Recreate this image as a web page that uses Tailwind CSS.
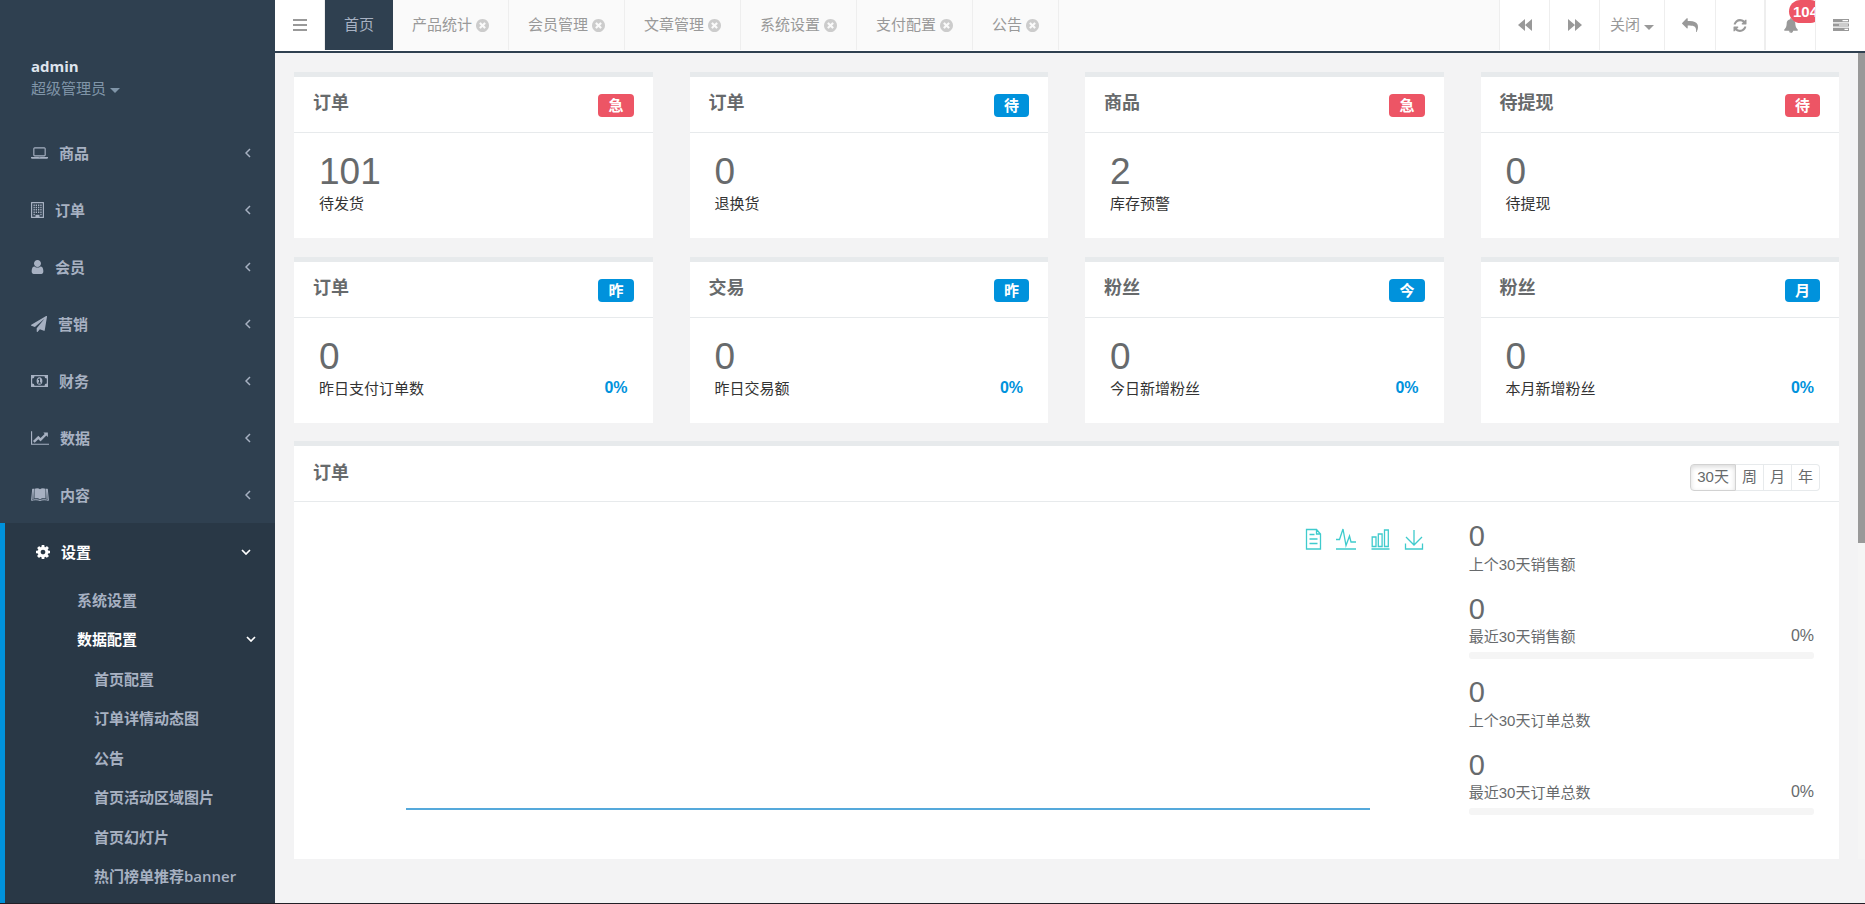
<!DOCTYPE html>
<html lang="zh-CN">
<head>
<meta charset="utf-8">
<title>管理后台</title>
<script src="https://cdn.jsdelivr.net/npm/@tailwindcss/browser@4"></script>
</head>
<body class="h-screen overflow-hidden bg-[#f3f3f4] font-['Liberation_Sans','Noto_Sans_CJK_SC',sans-serif] text-[15px] leading-[22px] text-[#676a6c]">

<svg class="hidden" aria-hidden="true">
  <symbol id="laptop" viewBox="0 0 1920 1792"><path d="M416 1280q-66 0-113-47t-47-113v-704q0-66 47-113t113-47h1088q66 0 113 47t47 113v704q0 66-47 113t-113 47h-1088zm-32-864v704q0 13 9.500 22.500t22.500 9.500h1088q13 0 22.500-9.500t9.500-22.500v-704q0-13-9.500-22.500t-22.500-9.500h-1088q-13 0-22.500 9.500t-9.500 22.500zm1376 928h160v96q0 40-47 68t-113 28h-1600q-66 0-113-28t-47-68v-96h1760zm-720 96q16 0 16-16t-16-16h-160q-16 0-16 16t16 16h160z"/></symbol>
  <symbol id="building" viewBox="0 0 13 16"><path fill-rule="evenodd" d="M.5 0h12q.5 0 .5.500v15q0 .5-.5.500h-12q-.5 0-.5-.5v-15q0-.5.500-.5zM1.200 1.200v13.600h3.300v-2h4v2h3.300v-13.600z"/><path d="M2.500 2.500h1.300v1.500h-1.300zM4.700 2.500h1.300v1.500h-1.300zM7 2.500h1.300v1.500h-1.300zM9.300 2.500h1.300v1.500h-1.300zM2.500 4.800h1.300v1.500h-1.300zM4.700 4.800h1.300v1.500h-1.300zM7 4.800h1.300v1.500h-1.300zM9.300 4.800h1.300v1.500h-1.300zM2.500 7.100h1.300v1.500h-1.300zM4.700 7.100h1.300v1.500h-1.300zM7 7.100h1.300v1.500h-1.300zM9.300 7.100h1.300v1.500h-1.300zM2.500 9.400h1.300v1.500h-1.300zM4.700 9.400h1.300v1.500h-1.300zM7 9.400h1.300v1.500h-1.300zM9.300 9.400h1.300v1.500h-1.300zM2.500 11.700h1.300v1.500h-1.300zM9.300 11.700h1.300v1.500h-1.300z"/></symbol>
  <symbol id="user" viewBox="256 128 1280 1536"><path d="M1536 1399q0 109-62.500 187t-150.500 78h-854q-88 0-150.500-78t-62.500-187q0-85 8.500-160.500t31.500-152 58.500-131 94-89 134.500-34.500q131 128 313 128t313-128q76 0 134.500 34.500t94 89 58.500 131 31.500 152 8.500 160.500zm-256-887q0 159-112.500 271.500t-271.500 112.500-271.500-112.500-112.500-271.500 112.500-271.500 271.500-112.500 271.500 112.500 112.500 271.500z"/></symbol>
  <symbol id="plane" viewBox="0 0 1792 1792"><path d="M1764 11q33 24 27 64l-256 1536q-5 29-32 45-14 8-31 8-11 0-24-5l-453-185-242 295q-18 23-49 23-13 0-22-4-19-7-30.500-23.500t-11.500-36.500v-349l864-1059-1069 925-395-162q-37-14-40-55-2-40 32-59l1664-960q15-9 32-9 20 0 36 11z"/></symbol>
  <symbol id="money" viewBox="0 0 17 12"><path fill-rule="evenodd" d="M0 0h17v12h-17zM3.500 1.200q0 2.300-2.300 2.300v5q2.300 0 2.300 2.300h10q0-2.300 2.300-2.300v-5q-2.300 0-2.300-2.300z"/><path fill-rule="evenodd" d="M8.500 2.200c1.900 0 2.900 1.800 2.900 3.800s-1 3.800-2.900 3.800-2.900-1.800-2.900-3.800 1-3.800 2.900-3.800zM8 3.500l-1.200 1.100.6.700.6-.5v2.700h-1v.9h3v-.9h-1v-4z"/></symbol>
  <symbol id="linechart" viewBox="0 0 2048 1792"><path d="M2048 1536v128h-2048v-1536h128v1408h1920zm-128-1248v435q0 21-19.500 29.500t-35.500-7.500l-121-121-633 633q-10 10-23 10t-23-10l-233-233-416 416-192-192 585-585q10-10 23-10t23 10l233 233 464-464-121-121q-16-16-7.500-35.500t29.500-19.500h435q14 0 23 9t9 23z"/></symbol>
  <symbol id="book" viewBox="0 0 18 13"><path d="M3.500.8C5.500-.2 7.800 0 9 1.200c1.200-1.200 3.500-1.400 5.500-.4v9.800c-2-.7-4.300-.5-5.500.8-1.200-1.300-3.500-1.500-5.500-.8z"/><path fill="none" stroke="currentColor" d="M2.500 1H1.700L.6 12.400c2.600-.9 6-.9 8.400.1 2.400-1 5.800-1 8.400-.1L16.300 1h-.8M2.500 1L2 11M15.500 1l.5 10"/></symbol>
  <symbol id="cog" viewBox="128 128 1536 1536"><path d="M1152 896q0-106-75-181t-181-75-181 75-75 181 75 181 181 75 181-75 75-181zm512-109v222q0 12-8 23t-20 13l-185 28q-19 54-39 91 35 50 107 138 10 12 10 25t-9 23q-27 37-99 108t-94 71q-12 0-26-9l-138-108q-44 23-91 38-16 136-29 186-7 28-36 28h-222q-14 0-24.500-8.500t-11.500-21.500l-28-184q-49-16-90-37l-141 107q-10 9-25 9-14 0-25-11-126-114-165-168-7-10-7-23 0-12 8-23 15-21 51-66.500t54-70.500q-27-50-41-99l-183-27q-13-2-21-12.500t-8-23.500v-222q0-12 8-23t19-13l186-28q14-46 39-92-40-57-107-138-10-12-10-24 0-10 9-23 26-36 98.500-107.500t94.500-71.500q13 0 26 10l138 107q44-23 91-38 16-136 29-186 7-28 36-28h222q14 0 24.500 8.500t11.500 21.500l28 184q49 16 90 37l142-107q9-9 24-9 13 0 25 10 129 119 165 170 7 8 7 22 0 12-8 23-15 21-51 66.500t-54 70.500q26 50 41 98l183 28q13 2 21 12.500t8 23.500z"/></symbol>
  <symbol id="left" viewBox="0 0 6 10"><path d="M5 1L1 5l4 4" fill="none" stroke="currentColor" stroke-width="1.500"/></symbol>
  <symbol id="down" viewBox="0 0 10 6"><path d="M1 1l4 4 4-4" fill="none" stroke="currentColor" stroke-width="1.700"/></symbol>
  <symbol id="caret" viewBox="0 0 10 5"><path d="M0 0h10L5 5z"/></symbol>
  <symbol id="close" viewBox="128 128 1536 1536"><path d="M1277 1122q0-26-19-45l-181-181 181-181q19-19 19-45 0-27-19-46l-90-90q-19-19-46-19-26 0-45 19l-181 181-181-181q-19-19-45-19-27 0-46 19l-90 90q-19 19-19 46 0 26 19 45l181 181-181 181q-19 19-19 45 0 27 19 46l90 90q19 19 46 19 26 0 45-19l181-181 181 181q19 19 45 19 27 0 46-19l90-90q19-19 19-46zm387-226q0 209-103 385.500t-279.500 279.500-385.500 103-385.500-103-279.500-279.500-103-385.500 103-385.500 279.500-279.500 385.500-103 385.500 103 279.500 279.500 103 385.500z"/></symbol>
  <symbol id="bell" viewBox="64 0 1664 1792"><path d="M912 1696q0-16-16-16-59 0-101.500-42.500t-42.500-101.500q0-16-16-16t-16 16q0 73 51.500 124.500t124.500 51.500q16 0 16-16zm816-288q0 52-38 90t-90 38h-448q0 106-75 181t-181 75-181-75-75-181h-448q-52 0-90-38t-38-90q50-42 91-88t85-119.500 74.500-158.500 50-206 19.500-260q0-152 117-282.500t307-158.500q-8-19-8-39 0-40 28-68t68-28 68 28 28 68q0 20-8 39 190 28 307 158.500t117 282.500q0 139 19.500 260t50 206 74.500 158.500 85 119.500 91 88z"/></symbol>
  <symbol id="refresh" viewBox="128 128 1536 1536"><path d="M1639 1056q0 5-1 7-64 268-268 434.500t-478 166.500q-146 0-282.500-55t-243.500-157l-129 129q-19 19-45 19t-45-19-19-45v-448q0-26 19-45t45-19h448q26 0 45 19t19 45-19 45l-137 137q71 66 161 102t187 36q134 0 250-65t186-179q11-17 53-117 8-23 30-23h192q13 0 22.500 9.500t9.500 22.500zm25-800v448q0 26-19 45t-45 19h-448q-26 0-45-19t-19-45 19-45l138-138q-148-137-349-137-134 0-250 65t-186 179q-11 17-53 117-8 23-30 23h-199q-13 0-22.500-9.500t-9.500-22.500v-7q65-268 270-434.500t480-166.500q146 0 284 55.500t245 156.500l130-129q19-19 45-19t45 19 19 45z"/></symbol>
  <symbol id="reply" viewBox="0 64 1792 1536"><path d="M1792 1120q0 166-127 451-3 7-10.500 24t-13.500 30-13 22q-12 17-28 17-15 0-23.500-10t-8.500-25q0-9 2.500-26.500t2.500-23.500q5-68 5-123 0-101-17.500-181t-48.500-138.500-80-101-105.500-69.500-133-42.500-154-21.500-175.500-6h-224v256q0 26-19 45t-45 19-45-19l-512-512q-19-19-19-45t19-45l512-512q19-19 45-19t45 19 19 45v256h224q713 0 875 403 53 134 53 333z"/></symbol>
  <symbol id="rewind" viewBox="0 0 14 12"><path d="M7 0v12L0 6zM14 0v12L7 6z"/></symbol>
  <symbol id="forward" viewBox="0 0 14 12"><path d="M0 0v12l7-6zM7 0v12l7-6z"/></symbol>
  <symbol id="bars" viewBox="0 0 14 12"><path d="M0 0h14v2H0zM0 5h14v2H0zM0 10h14v2H0z"/></symbol>
  <symbol id="tasks" viewBox="0 0 16 12"><path fill-rule="evenodd" d="M0 0h16v3.200H0zM9.500 1h5.500v1.200H9.500zM0 4.400h16v3.200H0zM6 5.400h9v1.200H6zM0 8.800h16V12H0zM11.500 9.800H15V11h-3.500z"/></symbol>
</svg>

<div class="flex h-full border-b border-[#221f26]">
  <nav class="w-[275px] shrink-0 overflow-hidden bg-[#2f4050] font-['Open_Sans','Noto_Sans_CJK_SC',sans-serif] font-semibold text-[#a7b1c2]">
    <div class="h-[124px] px-[31px] pt-[55px]">
      <strong class="block font-bold text-[#dfe4ed]">admin</strong>
      <button class="flex items-center gap-1 font-normal text-[#8095a8]">超级管理员<svg class="mt-1 h-[5px] w-[10px] fill-current"><use href="#caret"/></svg></button>
    </div>
    <ul>
      <li><a href="#" class="flex h-[57px] items-center gap-[11px] pl-[31px] pr-6"><svg class="h-4 w-[17px] fill-current"><use href="#laptop"/></svg><span class="flex-1">商品</span><svg class="h-[10px] w-[6px]"><use href="#left"/></svg></a></li>
      <li><a href="#" class="flex h-[57px] items-center gap-[11px] pl-[31px] pr-6"><svg class="h-4 w-[13px] fill-current"><use href="#building"/></svg><span class="flex-1">订单</span><svg class="h-[10px] w-[6px]"><use href="#left"/></svg></a></li>
      <li><a href="#" class="flex h-[57px] items-center gap-[11px] pl-[31px] pr-6"><svg class="h-[14px] w-[13px] fill-current"><use href="#user"/></svg><span class="flex-1">会员</span><svg class="h-[10px] w-[6px]"><use href="#left"/></svg></a></li>
      <li><a href="#" class="flex h-[57px] items-center gap-[11px] pl-[31px] pr-6"><svg class="h-4 w-4 fill-current"><use href="#plane"/></svg><span class="flex-1">营销</span><svg class="h-[10px] w-[6px]"><use href="#left"/></svg></a></li>
      <li><a href="#" class="flex h-[57px] items-center gap-[11px] pl-[31px] pr-6"><svg class="h-3 w-[17px] fill-current"><use href="#money"/></svg><span class="flex-1">财务</span><svg class="h-[10px] w-[6px]"><use href="#left"/></svg></a></li>
      <li><a href="#" class="flex h-[57px] items-center gap-[11px] pl-[31px] pr-6"><svg class="h-4 w-[18px] fill-current"><use href="#linechart"/></svg><span class="flex-1">数据</span><svg class="h-[10px] w-[6px]"><use href="#left"/></svg></a></li>
      <li><a href="#" class="flex h-[57px] items-center gap-[11px] pl-[31px] pr-6"><svg class="h-[13px] w-[18px] fill-current"><use href="#book"/></svg><span class="flex-1">内容</span><svg class="h-[10px] w-[6px]"><use href="#left"/></svg></a></li>
      <li class="h-[400px] border-l-[5px] border-[#0092dc] bg-[#293846]">
        <a href="#" class="flex h-[57px] items-center gap-[11px] pl-[31px] pr-6 text-white"><svg class="h-[14px] w-[14px] fill-current"><use href="#cog"/></svg><span class="flex-1">设置</span><svg class="h-[6px] w-[10px]"><use href="#down"/></svg></a>
        <ul class="grid h-[316px] auto-rows-fr">
          <li><a href="#" class="flex h-full items-center pl-[72px]">系统设置</a></li>
          <li class="contents">
            <a href="#" class="flex items-center justify-between pl-[72px] pr-[19px] text-white">数据配置<svg class="h-[6px] w-[10px]"><use href="#down"/></svg></a>
            <ul class="contents">
              <li><a href="#" class="flex h-full items-center pl-[89px]">首页配置</a></li>
              <li><a href="#" class="flex h-full items-center pl-[89px]">订单详情动态图</a></li>
              <li><a href="#" class="flex h-full items-center pl-[89px]">公告</a></li>
              <li><a href="#" class="flex h-full items-center pl-[89px]">首页活动区域图片</a></li>
              <li><a href="#" class="flex h-full items-center pl-[89px]">首页幻灯片</a></li>
              <li><a href="#" class="flex h-full items-center pl-[89px]">热门榜单推荐banner</a></li>
            </ul>
          </li>
        </ul>
      </li>
    </ul>
  </nav>

  <div class="flex min-w-0 flex-1 flex-col">
    <header class="h-[53px] shrink-0 border-b-2 border-[#2f4050] bg-white text-[#999]">
      <div class="flex h-[50px] bg-[#fafafa]">
        <button aria-label="菜单" class="flex w-[50px] items-center justify-center border-r border-[#eee] bg-white"><svg class="h-3 w-[14px] fill-current"><use href="#bars"/></svg></button>
        <nav class="flex min-w-0 flex-1">
          <a href="#" class="flex items-center bg-[#2f4050] px-[19px] text-[#a7b1c2]">首页</a>
          <a href="#" class="flex items-center gap-1 border-r border-[#eee] px-[19px]">产品统计<svg class="h-[13px] w-[13px] fill-[#ccc]"><use href="#close"/></svg></a>
          <a href="#" class="flex items-center gap-1 border-r border-[#eee] px-[19px]">会员管理<svg class="h-[13px] w-[13px] fill-[#ccc]"><use href="#close"/></svg></a>
          <a href="#" class="flex items-center gap-1 border-r border-[#eee] px-[19px]">文章管理<svg class="h-[13px] w-[13px] fill-[#ccc]"><use href="#close"/></svg></a>
          <a href="#" class="flex items-center gap-1 border-r border-[#eee] px-[19px]">系统设置<svg class="h-[13px] w-[13px] fill-[#ccc]"><use href="#close"/></svg></a>
          <a href="#" class="flex items-center gap-1 border-r border-[#eee] px-[19px]">支付配置<svg class="h-[13px] w-[13px] fill-[#ccc]"><use href="#close"/></svg></a>
          <a href="#" class="flex items-center gap-1 border-r border-[#eee] px-[19px]">公告<svg class="h-[13px] w-[13px] fill-[#ccc]"><use href="#close"/></svg></a>
        </nav>
        <div class="flex bg-white">
          <button aria-label="向左" class="flex w-[50px] items-center justify-center border-l border-[#eee]"><svg class="h-3 w-[14px] fill-current"><use href="#rewind"/></svg></button>
          <button aria-label="向右" class="flex w-[50px] items-center justify-center border-l border-[#eee]"><svg class="h-3 w-[14px] fill-current"><use href="#forward"/></svg></button>
          <button class="flex w-[65px] items-center justify-center gap-1 border-l border-[#eee]">关闭<svg class="mt-1 h-[5px] w-[10px] fill-current"><use href="#caret"/></svg></button>
          <button aria-label="返回" class="flex w-[51px] items-center justify-center border-l border-[#eee]"><svg class="h-[14px] w-4 fill-current"><use href="#reply"/></svg></button>
          <button aria-label="刷新" class="flex w-[49px] items-center justify-center border-l border-[#eee]"><svg class="h-[13px] w-[14px] fill-current"><use href="#refresh"/></svg></button>
          <button aria-label="通知" class="relative flex w-[51px] items-center justify-center overflow-hidden border-l-2 border-[#eee]"><svg class="h-[15px] w-[14px] fill-current"><use href="#bell"/></svg><span class="absolute left-[23px] top-0 h-[23px] rounded-full bg-[#ed5565] px-1 font-bold leading-[23px] text-white">104</span></button>
          <button aria-label="任务" class="flex w-[50px] items-center justify-center border-l border-[#eee]"><svg class="h-3 w-4 fill-current"><use href="#tasks"/></svg></button>
        </div>
      </div>
    </header>

    <div class="flex min-h-0 flex-1">
      <main class="min-w-0 flex-1 overflow-hidden p-[19px]">
        <div class="grid grid-cols-4 gap-x-[37px] gap-y-[19px]">
          <section class="border-t-[5px] border-[#e7eaec] bg-white">
            <div class="flex h-14 items-start justify-between border-b border-[#e7eaec] px-[19px] pt-[17px]"><h5 class="text-[18px] leading-[18px] font-semibold">订单</h5><span class="rounded-[4px] bg-[#ed5565] px-[10px] font-semibold leading-[23px] text-white">急</span></div>
            <div class="h-[105px] px-[25px] pt-5"><h1 class="text-[37px] leading-[38px]">101</h1><div class="mt-[2px] flex justify-between"><span class="text-[#333]">待发货</span></div></div>
          </section>
          <section class="border-t-[5px] border-[#e7eaec] bg-white">
            <div class="flex h-14 items-start justify-between border-b border-[#e7eaec] px-[19px] pt-[17px]"><h5 class="text-[18px] leading-[18px] font-semibold">订单</h5><span class="rounded-[4px] bg-[#0092dc] px-[10px] font-semibold leading-[23px] text-white">待</span></div>
            <div class="h-[105px] px-[25px] pt-5"><h1 class="text-[37px] leading-[38px]">0</h1><div class="mt-[2px] flex justify-between"><span class="text-[#333]">退换货</span></div></div>
          </section>
          <section class="border-t-[5px] border-[#e7eaec] bg-white">
            <div class="flex h-14 items-start justify-between border-b border-[#e7eaec] px-[19px] pt-[17px]"><h5 class="text-[18px] leading-[18px] font-semibold">商品</h5><span class="rounded-[4px] bg-[#ed5565] px-[10px] font-semibold leading-[23px] text-white">急</span></div>
            <div class="h-[105px] px-[25px] pt-5"><h1 class="text-[37px] leading-[38px]">2</h1><div class="mt-[2px] flex justify-between"><span class="text-[#333]">库存预警</span></div></div>
          </section>
          <section class="border-t-[5px] border-[#e7eaec] bg-white">
            <div class="flex h-14 items-start justify-between border-b border-[#e7eaec] px-[19px] pt-[17px]"><h5 class="text-[18px] leading-[18px] font-semibold">待提现</h5><span class="rounded-[4px] bg-[#ed5565] px-[10px] font-semibold leading-[23px] text-white">待</span></div>
            <div class="h-[105px] px-[25px] pt-5"><h1 class="text-[37px] leading-[38px]">0</h1><div class="mt-[2px] flex justify-between"><span class="text-[#333]">待提现</span></div></div>
          </section>
          <section class="border-t-[5px] border-[#e7eaec] bg-white">
            <div class="flex h-14 items-start justify-between border-b border-[#e7eaec] px-[19px] pt-[17px]"><h5 class="text-[18px] leading-[18px] font-semibold">订单</h5><span class="rounded-[4px] bg-[#0092dc] px-[10px] font-semibold leading-[23px] text-white">昨</span></div>
            <div class="h-[105px] px-[25px] pt-5"><h1 class="text-[37px] leading-[38px]">0</h1><div class="mt-[2px] flex justify-between"><span class="text-[#333]">昨日支付订单数</span><b class="text-base leading-[20px] text-[#0092dc]">0%</b></div></div>
          </section>
          <section class="border-t-[5px] border-[#e7eaec] bg-white">
            <div class="flex h-14 items-start justify-between border-b border-[#e7eaec] px-[19px] pt-[17px]"><h5 class="text-[18px] leading-[18px] font-semibold">交易</h5><span class="rounded-[4px] bg-[#0092dc] px-[10px] font-semibold leading-[23px] text-white">昨</span></div>
            <div class="h-[105px] px-[25px] pt-5"><h1 class="text-[37px] leading-[38px]">0</h1><div class="mt-[2px] flex justify-between"><span class="text-[#333]">昨日交易额</span><b class="text-base leading-[20px] text-[#0092dc]">0%</b></div></div>
          </section>
          <section class="border-t-[5px] border-[#e7eaec] bg-white">
            <div class="flex h-14 items-start justify-between border-b border-[#e7eaec] px-[19px] pt-[17px]"><h5 class="text-[18px] leading-[18px] font-semibold">粉丝</h5><span class="rounded-[4px] bg-[#0092dc] px-[10px] font-semibold leading-[23px] text-white">今</span></div>
            <div class="h-[105px] px-[25px] pt-5"><h1 class="text-[37px] leading-[38px]">0</h1><div class="mt-[2px] flex justify-between"><span class="text-[#333]">今日新增粉丝</span><b class="text-base leading-[20px] text-[#0092dc]">0%</b></div></div>
          </section>
          <section class="border-t-[5px] border-[#e7eaec] bg-white">
            <div class="flex h-14 items-start justify-between border-b border-[#e7eaec] px-[19px] pt-[17px]"><h5 class="text-[18px] leading-[18px] font-semibold">粉丝</h5><span class="rounded-[4px] bg-[#0092dc] px-[10px] font-semibold leading-[23px] text-white">月</span></div>
            <div class="h-[105px] px-[25px] pt-5"><h1 class="text-[37px] leading-[38px]">0</h1><div class="mt-[2px] flex justify-between"><span class="text-[#333]">本月新增粉丝</span><b class="text-base leading-[20px] text-[#0092dc]">0%</b></div></div>
          </section>
        </div>

        <section class="mt-[18px] border-t-[5px] border-[#e7eaec] bg-white">
          <div class="flex h-14 items-start justify-between border-b border-[#e7eaec] px-[19px] pt-[18px]">
            <h5 class="text-[18px] leading-[18px] font-semibold">订单</h5>
            <div class="flex h-[27px] leading-[23px]">
              <button class="flex rounded-l-[4px] border border-[#d2d2d2] px-[6px] shadow-[inset_0_2px_5px_rgba(0,0,0,0.15)]">30天</button>
              <button class="flex border-y border-r border-[#e7eaec] px-[6px]">周</button>
              <button class="flex border-y border-r border-[#e7eaec] px-[6px]">月</button>
              <button class="flex rounded-r-[4px] border-y border-r border-[#e7eaec] px-[6px]">年</button>
            </div>
          </div>
          <div class="grid grid-cols-4 gap-x-[38px] px-[25px] pb-11 pt-[18px]">
            <div class="col-span-3 flex flex-col pb-[5px] pt-2">
              <div class="flex justify-end gap-[14px] pr-[7px] text-[#3fcbcd]">
                <button aria-label="数据视图"><svg class="h-[22px] w-[17px]" viewBox="0 0 17 22" fill="none" stroke="currentColor" stroke-width="1.300"><path d="M1.500 1.500h10l4 4.500v15h-14zM11.500 1.500V6h4M4.500 6.500h5M4.500 11h8M4.500 15.500h8"/></svg></button>
                <button aria-label="折线图"><svg class="h-[22px] w-5" viewBox="0 0 20 22" fill="none" stroke="currentColor" stroke-width="1.300"><path d="M0 11.500h3.500L7 1l3 16.500 3.500-9.500 1.500 6h5M0 21h20"/></svg></button>
                <button aria-label="柱状图"><svg class="h-[22px] w-5" viewBox="0 0 20 22" fill="none" stroke="currentColor" stroke-width="1.300"><path d="M2.200 9H6v9.500H2.200zM8.300 6h3.800v12.500H8.300zM14.500 2h3.800v16.500h-3.800zM1.500 21h18"/></svg></button>
                <button aria-label="下载"><svg class="h-[22px] w-5" viewBox="0 0 20 22" fill="none" stroke="currentColor" stroke-width="1.300"><path d="M10 2v15M2 9l8 8 8-8M1.500 15.500V21h17v-5.500"/></svg></button>
              </div>
              <div class="ml-[87px] mr-[61px] mt-auto h-[2px] bg-[#55a9db]"></div>
            </div>
            <div>
              <h2 class="text-[29px] leading-[33px]">0</h2>
              <p class="mb-[17px] pt-px">上个30天销售额</p>
              <h2 class="text-[29px] leading-[33px]">0</h2>
              <div class="flex justify-between"><span>最近30天销售额</span><span class="text-base leading-[20px]">0%</span></div>
              <div class="mb-[17px] mt-1 h-[7px] rounded-[3px] bg-[#f5f5f5]"></div>
              <h2 class="text-[29px] leading-[33px]">0</h2>
              <p class="mb-[17px] pt-px">上个30天订单总数</p>
              <h2 class="text-[29px] leading-[33px]">0</h2>
              <div class="flex justify-between"><span>最近30天订单总数</span><span class="text-base leading-[20px]">0%</span></div>
              <div class="mt-1 h-[7px] rounded-[3px] bg-[#f5f5f5]"></div>
            </div>
          </div>
        </section>
      </main>
      <div class="w-[7px] shrink-0"><div class="h-[490px] bg-[#999]"></div><div class="h-[316px] bg-[#f5f5f5]"></div></div>
    </div>
  </div>
</div>
</body>
</html>
